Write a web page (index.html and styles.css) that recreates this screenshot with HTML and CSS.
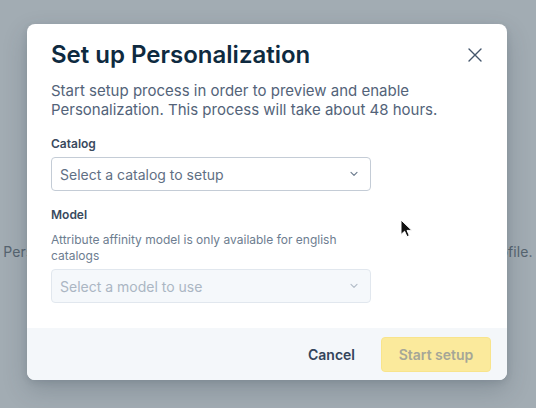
FILE: index.html
```html
<!DOCTYPE html>
<html lang="en">
<head>
<meta charset="utf-8">
<title>Set up Personalization</title>
<link rel="stylesheet" href="styles.css">
</head>
<body>
<div class="page">
  <p class="page-text">Personalization hasn't been set up yet. Start setup to personalize every profile.</p>
</div>
<div class="modal" role="dialog">
  <div class="modal-body">
    <div class="modal-header">
      <h1 class="modal-title">Set up Personalization</h1>
      <button class="close-btn" aria-label="Close">
        <svg width="16" height="16" viewBox="0 0 16 16"><path d="M2 2L14 14M14 2L2 14" stroke="#44566c" stroke-width="1.4" stroke-linecap="round"/></svg>
      </button>
    </div>
    <p class="modal-desc">Start setup process in order to preview and enable Personalization. This process will take about 48 hours.</p>
    <div class="field">
      <label class="field-label">Catalog</label>
      <div class="select">
        <span>Select a catalog to setup</span>
        <svg class="chev" width="10" height="6" viewBox="0 0 10 6"><path d="M2 1.3L5 4.3L8 1.3" fill="none" stroke="#6f7e90" stroke-width="1.2" stroke-linecap="round" stroke-linejoin="round"/></svg>
      </div>
    </div>
    <div class="field field-model">
      <label class="field-label">Model</label>
      <p class="field-help">Attribute affinity model is only available for english catalogs</p>
      <div class="select select-disabled">
        <span>Select a model to use</span>
        <svg class="chev" width="10" height="6" viewBox="0 0 10 6"><path d="M2 1.3L5 4.3L8 1.3" fill="none" stroke="#b3bdc8" stroke-width="1.2" stroke-linecap="round" stroke-linejoin="round"/></svg>
      </div>
    </div>
  </div>
  <div class="modal-footer">
    <button class="btn btn-cancel">Cancel</button>
    <button class="btn btn-primary" disabled>Start setup</button>
  </div>
</div>
<svg class="cursor" width="13" height="19" viewBox="0 0 13 19"><path d="M1 1L1 15.5L4.6 12.2L7 17.6L9.3 16.6L7 11.4L11.8 11.4Z" fill="#111" stroke="#fff" stroke-width="1"/></svg>
</body>
</html>
```
FILE: styles.css
```css
* { box-sizing: border-box; }
html, body { margin: 0; padding: 0; }
body {
  width: 536px;
  height: 408px;
  overflow: hidden;
  background: #a2acb3;
  font-family: Inter, "Noto Sans", sans-serif;
  position: relative;
}
.page {
  padding-top: 243px;
  text-align: center;
}
.page-text {
  margin: 0;
  font-size: 14px;
  line-height: 18px;
  letter-spacing: 0.11px;
  color: #566470;
  white-space: nowrap;
}
.modal {
  position: absolute;
  left: 27px;
  top: 24px;
  width: 480px;
  background: #fff;
  border-radius: 8px;
  box-shadow: 0 10px 24px rgba(40, 55, 70, 0.22), 0 2px 6px rgba(40, 55, 70, 0.12);
  overflow: hidden;
}
.modal-body {
  padding: 16px 24px 25px;
}
.modal-header {
  display: flex;
  align-items: center;
  justify-content: space-between;
}
.modal-title {
  margin: 0;
  font-size: 24px;
  line-height: 30px;
  font-weight: 600;
  color: #0e2a40;
}
.close-btn {
  border: 0;
  background: none;
  padding: 0;
  margin-right: 0;
  width: 16px;
  height: 16px;
  display: flex;
}
.modal-desc {
  margin: 11px 0 0;
  font-size: 15px;
  line-height: 19px;
  color: #536379;
}
.field { margin-top: 16px; display: flex; flex-direction: column; }
.field-model { margin-top: 15px; }
.field-label {
  font-size: 12px;
  line-height: 18px;
  font-weight: 600;
  color: #3a4a5e;
  margin-bottom: 4px;
}
.field-help {
  margin: 4px 0 5px;
  max-width: 320px;
  font-size: 12px;
  line-height: 16px;
  color: #6d7d90;
}
.select {
  width: 320px;
  height: 34px;
  border: 1px solid #c4ccd6;
  border-radius: 4px;
  display: flex;
  align-items: center;
  justify-content: space-between;
  padding: 0 11px 0 8px;
  font-size: 14px;
  color: #5f6f84;
  background: #fff;
}
.select-disabled {
  background: #f5f8fb;
  border-color: #e1e7ee;
  color: #abb6c3;
}
.chev { display: block; }
.modal-footer {
  background: #f4f7fa;
  height: 52px;
  display: flex;
  align-items: center;
  justify-content: flex-end;
  gap: 9px;
  padding: 0 16px;
}
.btn {
  font-family: inherit;
  font-size: 14px;
  font-weight: 600;
  border-radius: 4px;
  height: 35px;
  padding: 0 16px;
  border: 1px solid transparent;
  background: none;
  white-space: nowrap;
}
.btn-cancel { color: #33445a; }
.btn-primary {
  width: 110px;
  padding: 0;
  background: #fbea9c;
  border-color: #f8e48c;
  color: #a5a697;
}
.cursor {
  position: absolute;
  left: 400px;
  top: 219px;
}
```
